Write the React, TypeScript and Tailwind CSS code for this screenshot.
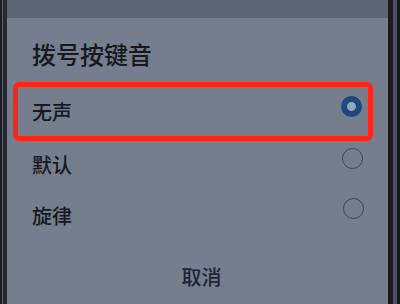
const font = { fontFamily: '"Noto Sans CJK SC", "Noto Sans", sans-serif' }

function Radio({ checked }: { checked?: boolean }) {
  return checked ? (
    <span className="block h-[21px] w-[21px] rounded-full border-[6px] border-[#1b4a7c] bg-[#9aa6b6]" />
  ) : (
    <span className="block h-[21px] w-[21px] rounded-full border-[1.5px] border-[#3c4350]" />
  )
}

export default function App() {
  return (
    <div className="flex h-[304px] w-[400px] overflow-hidden bg-[#20232a]" style={font}>
      <div className="flex w-[7px] shrink-0">
        <div className="w-[2px] bg-[#1b1d22]" />
        <div className="w-[1px] bg-[#5a606c]" />
        <div className="w-[4px] bg-[#262930]" />
      </div>

      <div className="flex w-[381px] shrink-0 flex-col bg-[#767d8c] font-medium text-[#16191f]">
        <div className="h-[18px] bg-[#5d6473]" />

        <div className="h-[64px] pl-[25px] pt-[24px] text-[24px] leading-[24px]">拨号按键音</div>

        <div className="ml-[6px] flex h-[59px] w-[360px] items-center justify-between rounded-[6px] border-[5px] border-[#ff2618] pl-[14px] pr-[6px]">
          <span className="text-[20px] leading-[20px]">无声</span>
          <span className="-translate-y-[5px]">
            <Radio checked />
          </span>
        </div>

        <div className="flex h-[48px] items-center justify-between pl-[25px] pr-[25px]">
          <span className="text-[20px] leading-[20px]">默认</span>
          <span className="-translate-y-[7px]">
            <Radio />
          </span>
        </div>

        <div className="flex h-[51px] items-center justify-between pl-[25px] pr-[24px]">
          <span className="translate-y-[1px] text-[20px] leading-[20px]">旋律</span>
          <span className="-translate-y-[6px]">
            <Radio />
          </span>
        </div>

        <div className="flex h-[64px] items-start justify-center pl-[8px] pt-[27px] text-[20px] leading-[20px] text-[#1b2638]">
          取消
        </div>
      </div>

      <div className="flex w-[12px] shrink-0">
        <div className="w-[5px] bg-[#1a1c22]" />
        <div className="w-[4px] bg-[#4a505c]" />
        <div className="w-[3px] bg-[#15171b]" />
      </div>
    </div>
  )
}
